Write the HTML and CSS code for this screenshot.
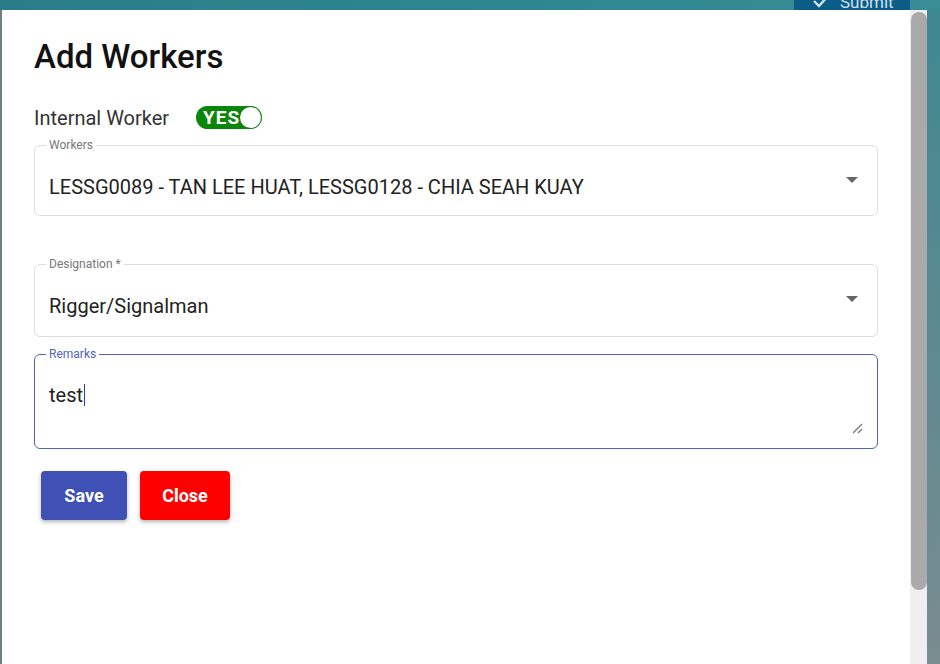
FILE: index.html
```html
<!DOCTYPE html>
<html lang="en">
<head>
    <meta charset="UTF-8">
    <title>Add Workers</title>
    <link rel="stylesheet" href="styles.css">
</head>
<body>
    <div class="backdrop-bar">
        <div class="submit-button">
            <svg width="18" height="14" viewBox="0 0 18 14"><path d="M2 6 L7 11 L16 1" fill="none" stroke="#cfe3ef" stroke-width="2.4"/></svg>
            <span>Submit</span>
        </div>
    </div>
    <div class="page-row">
        <div class="left-edge"></div>
        <div class="dialog">
            <div class="dialog-content">
                <h1 class="dialog-title">Add Workers</h1>

                <div class="toggle-row">
                    <span class="toggle-label">Internal Worker</span>
                    <div class="toggle on">
                        <span class="toggle-text">YES</span>
                        <span class="toggle-knob"></span>
                    </div>
                </div>

                <fieldset class="field field-workers">
                    <legend>Workers</legend>
                    <div class="field-value">LESSG0089 - TAN LEE HUAT, LESSG0128 - CHIA SEAH KUAY</div>
                    <span class="select-arrow"></span>
                </fieldset>

                <fieldset class="field field-designation">
                    <legend>Designation *</legend>
                    <div class="field-value">Rigger/Signalman</div>
                    <span class="select-arrow"></span>
                </fieldset>

                <fieldset class="field field-remarks focused">
                    <legend>Remarks</legend>
                    <div class="field-value">test<span class="caret"></span></div>
                    <svg class="resize-handle" width="12" height="12" viewBox="0 0 12 12">
                        <path d="M11 2 L2 11 M11 7 L7 11" stroke="#777" stroke-width="1.3"/>
                    </svg>
                </fieldset>

                <div class="actions">
                    <button class="btn btn-save">Save</button>
                    <button class="btn btn-close">Close</button>
                </div>
            </div>
            <div class="scrollbar">
                <div class="scroll-thumb"></div>
            </div>
        </div>
        <div class="right-edge"></div>
    </div>
</body>
</html>
```

FILE: styles.css
```css
body {
    margin: 0;
    height: 664px;
    overflow: hidden;
    background: linear-gradient(90deg, #2a7d88, #2f8791 60%, #3a8c95);
    font-family: Roboto, 'Liberation Sans', sans-serif;
    display: flex;
    flex-direction: column;
}

/* полоска фона сверху */
.backdrop-bar {
    height: 10px;
    position: relative;
    overflow: hidden;
    flex-shrink: 0;
}

.submit-button {
    position: absolute;
    right: 30px;
    top: -9px;
    width: 116px;
    height: 22px;
    background-color: #0b5c87;
    color: #cfe3ef;
    font-size: 17px;
    display: flex;
    align-items: center;
    gap: 10px;
    padding-left: 18px;
    box-sizing: border-box;
}

.page-row {
    flex: 1;
    display: flex;
}

.left-edge {
    width: 2px;
    background-color: #6f7f82;
}

.dialog {
    width: 925px;
    background-color: #ffffff;
    display: flex;
}

.dialog-content {
    flex: 1;
    padding: 0 32px 0 32px;
}

.dialog-title {
    margin: 27px 0 0 0;
    font-size: 33px;
    font-weight: 500;
    color: #111;
    line-height: 40px;
}

.toggle-row {
    display: flex;
    align-items: center;
    margin-top: 27px;
    height: 26px;
}

.toggle-label {
    font-size: 20px;
    color: #333;
    width: 162px;
    padding-top: 2px;
}

.toggle {
    position: relative;
    width: 66px;
    height: 23px;
    border-radius: 12px;
    background-color: #0a860a;
    box-sizing: border-box;
    overflow: hidden;
}

.toggle-text {
    position: absolute;
    left: 7px;
    top: 2px;
    color: #fff;
    font-size: 19px;
    font-weight: bold;
    letter-spacing: 1px;
    line-height: 19px;
}

.toggle-knob {
    position: absolute;
    right: 1px;
    top: 1px;
    width: 21px;
    height: 21px;
    border-radius: 50%;
    background-color: #fff;
    box-shadow: 0 0 1px rgba(0, 0, 0, 0.3);
}

.field {
    position: relative;
    margin: 0;
    border: 1px solid #dedede;
    border-radius: 6px;
    padding: 0 14px;
    min-width: 0;
}

.field legend {
    font-size: 12px;
    line-height: 14px;
    color: #777;
    padding: 0 3px;
    margin-left: -3px;
}

.field-value {
    font-size: 20px;
    color: #222;
    line-height: 22px;
}

.field-workers {
    margin-top: 8px;
    height: 78px;
    box-sizing: border-box;
    padding-top: 24px;
}

.field-designation {
    margin-top: 41px;
    height: 80px;
    box-sizing: border-box;
    padding-top: 24px;
}

.field-remarks {
    margin-top: 10px;
    height: 102px;
    box-sizing: border-box;
    padding-top: 23px;
}

.field.focused {
    border: 1.5px solid #5361c4;
}

.field.focused legend {
    color: #5361c4;
}

.caret {
    display: inline-block;
    width: 1px;
    height: 22px;
    background-color: #2b3aa8;
    vertical-align: -4px;
    margin-left: 1px;
}

.select-arrow {
    position: absolute;
    right: 19px;
    top: 25px;
    width: 0;
    height: 0;
    border-left: 6px solid transparent;
    border-right: 6px solid transparent;
    border-top: 6px solid #666;
}

.resize-handle {
    position: absolute;
    right: 14px;
    bottom: 14px;
}

.actions {
    display: flex;
    gap: 13px;
    margin-top: 22px;
    padding-left: 7px;
}

.btn {
    height: 49px;
    border: none;
    border-radius: 4px;
    color: #fff;
    font-family: Roboto, 'Liberation Sans', sans-serif;
    font-size: 18px;
    font-weight: bold;
    box-shadow: 0 2px 4px rgba(0, 0, 0, 0.3);
    cursor: pointer;
}

.btn-save {
    width: 86px;
    background-color: #3f51b5;
}

.btn-close {
    width: 90px;
    background-color: #ff0000;
}

.scrollbar {
    width: 17px;
    background-color: #efefef;
    padding-top: 2px;
    box-sizing: border-box;
}

.scroll-thumb {
    margin: 0 auto;
    width: 16px;
    height: 578px;
    border-radius: 8px;
    background-color: #aaaaaa;
}

.right-edge {
    flex: 1;
    background: linear-gradient(180deg, #3e8890, #7a8c90);
}
```
